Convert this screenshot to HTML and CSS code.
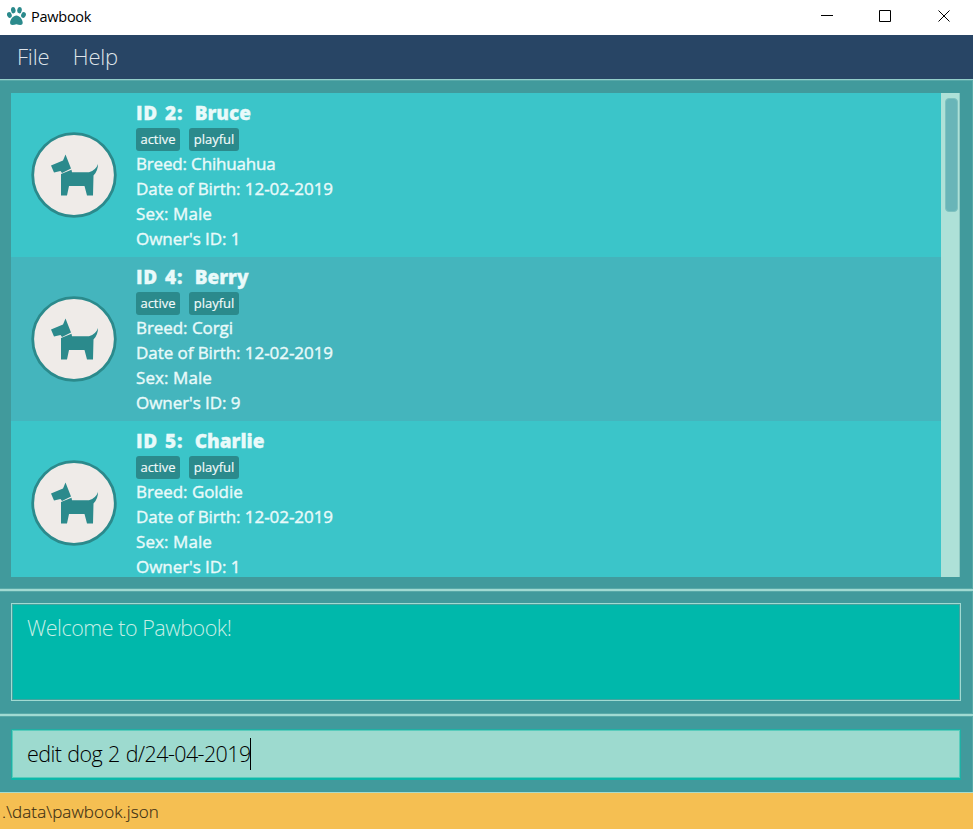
FILE: index.html
```html
<!DOCTYPE html>
<html lang="en">
<head>
<meta charset="utf-8">
<title>Pawbook</title>
<link rel="stylesheet" href="styles.css">
</head>
<body>
<svg class="defs" width="0" height="0" aria-hidden="true">
  <symbol id="dog" viewBox="0 0 86 86">
    <circle cx="43" cy="43" r="41.3" fill="#efebe8" stroke="#2b8a8c" stroke-width="2.800"/>
    <path fill="#2b8a8c" d="M20 33.500 32 28.500 34.500 22.500 40 36.500 31 41 29.500 39 23 40.500ZM30 42 40.500 37.800 41 40.300H58Q65 38 67 32Q67 39 62.500 43.500L62 63.500H56L53.500 54H38L36 63.500H30Z"/>
  </symbol>
</svg>
<div class="window">
  <header class="titlebar">
    <svg class="paw" viewBox="0 0 19 18" fill="#2b8a8c"><ellipse cx="2.400" cy="8" rx="2.300" ry="2.900" transform="rotate(-20 2.400 8)"/><ellipse cx="6.300" cy="3.200" rx="2.300" ry="3.200" transform="rotate(-8 6.300 3.200)"/><ellipse cx="12.500" cy="3.200" rx="2.300" ry="3.200" transform="rotate(8 12.500 3.200)"/><ellipse cx="16.500" cy="8" rx="2.300" ry="2.900" transform="rotate(20 16.500 8)"/><path d="M9.400 8.500C12.500 8.500 15.700 12.300 15.700 15.700 15.700 18.700 12.500 18 9.400 17.200 6.300 18 3.100 18.700 3.100 15.700 3.100 12.300 6.300 8.500 9.400 8.500Z"/></svg>
    <span class="title">Pawbook</span>
    <svg class="controls" viewBox="0 0 140 35" fill="none" stroke="#000"><path d="M8 15.500H20M66.500 10.500H77.500V21.500H66.500ZM125.500 10.500 136.500 21.500M136.500 10.500 125.500 21.500"/></svg>
  </header>
  <nav class="menu"><span>File</span><span>Help</span></nav>
  <main class="list-pane">
    <div class="list">
      <div class="rows">
        <article class="card">
          <svg class="avatar"><use href="#dog"/></svg>
          <div class="info">
            <h2 class="name"><span class="id">ID 2:</span>&nbsp; Bruce</h2>
            <div class="tags"><span class="tag active">active</span><span class="tag playful">playful</span></div>
            <p class="breed">Breed: Chihuahua</p><p>Date of Birth: 12-02-2019</p><p class="sex">Sex: Male</p><p>Owner's ID: 1</p>
          </div>
        </article>
        <article class="card alt">
          <svg class="avatar"><use href="#dog"/></svg>
          <div class="info">
            <h2 class="name"><span class="id">ID 4:</span>&nbsp; Berry</h2>
            <div class="tags"><span class="tag active">active</span><span class="tag playful">playful</span></div>
            <p>Breed: Corgi</p><p>Date of Birth: 12-02-2019</p><p class="sex">Sex: Male</p><p>Owner's ID: 9</p>
          </div>
        </article>
        <article class="card">
          <svg class="avatar"><use href="#dog"/></svg>
          <div class="info">
            <h2 class="name"><span class="id">ID 5:</span>&nbsp; Charlie</h2>
            <div class="tags"><span class="tag active">active</span><span class="tag playful">playful</span></div>
            <p>Breed: Goldie</p><p>Date of Birth: 12-02-2019</p><p class="sex">Sex: Male</p><p>Owner's ID: 1</p>
          </div>
        </article>
      </div>
      <div class="scrollbar"><div class="thumb"></div></div>
    </div>
  </main>
  <section class="result-pane"><div class="result"><span>Welcome to Pawbook!</span></div></section>
  <section class="command-pane"><div class="command"><span class="typed">edit dog 2 d/24-04-2019</span><i class="caret"></i></div></section>
  <footer class="status"><span>.\data\pawbook.json</span></footer>
</div>
</body>
</html>
```
FILE: styles.css
```css
* { box-sizing: border-box; margin: 0; }
body { font-family: "Open Sans", "Noto Sans", sans-serif; overflow: hidden; }
.defs { display: block; }
span, p, h2 { white-space: nowrap; }
.window { width: 973px; height: 829px; display: flex; flex-direction: column; background: #419a9c; }
.titlebar { height: 35px; background: #fff; display: flex; align-items: flex-start; padding-left: 7px; }
.paw { width: 19px; height: 18px; margin-top: 7px; }
.title { font: 14.5px/34px "Open Sans", sans-serif; margin-left: 5px; letter-spacing: -.25px; flex: 1; }
.controls { width: 140px; height: 35px; margin-right: 20px; }
.menu { height: 44px; background: #284565; color: #dfe4e9; font-size: 22px; font-weight: 300; line-height: 43px; letter-spacing: -.2px; padding-left: 17px; display: flex; gap: 23.5px; }
.list-pane { height: 510px; padding: 13px 13px 0 11px; border-top: 1px solid #92ceca; box-shadow: inset 0 1px #58a9a8, inset -1px 0 #58a9a8; }
.list { height: 484px; display: flex; overflow: hidden; }
.rows { width: 930px; }
.card { height: 164px; background: #3bc5c9; display: flex; padding: 0 0 0 20px; color: #e9fafa; }
.alt { background: #44b5bd; }
.avatar { width: 86px; height: 86px; margin-top: 39px; }
.info { margin-left: 19px; padding-top: 8px; }
.name { font-size: 19px; font-weight: 800; line-height: 25px; height: 25px; word-spacing: .8px; -webkit-text-stroke: .3px currentColor; }
.id { letter-spacing: .75px; word-spacing: 1.3px; }
.tags { display: flex; gap: 9px; height: 25px; padding-top: 2px; }
.tag { height: 23px; border-radius: 3px; background: #2b8a8c; font-size: 13px; line-height: 22px; text-align: center; color: #f3fbfb; -webkit-text-stroke: .15px currentColor; }
.active { width: 44px; }
.playful { width: 50px; }
.info p { font-size: 17px; line-height: 25px; letter-spacing: -.06px; -webkit-text-stroke: .4px currentColor; }
.info .breed { letter-spacing: -.17px; }
.info .sex { letter-spacing: .08px; }
.scrollbar { width: 19px; background: #aee1d8; padding: 5px 2px 0 4px; border-right: 1px solid #8fcac4; }
.thumb { width: 13px; height: 114px; border-radius: 4px; background: #69b5b8; border: 1px solid #7fc2c0; }
.result-pane { height: 125px; border-top: 2px solid #a1dad2; padding: 12px 12px 0 11px; box-shadow: inset 0 1px #58a9a8, inset -1px 0 #58a9a8, 0 -1px #58a9a8; }
.result { height: 98px; border: 1px solid #a1dad2; background: #00b8ab; color: #c6eee6; font-size: 21.5px; font-weight: 300; line-height: 47px; letter-spacing: -.48px; padding-left: 15px; box-shadow: inset 0 0 0 1px #43a49f; }
.command-pane { height: 78px; border-top: 2px solid #a1dad2; padding: 13px 12px 0 11px; box-shadow: inset 0 1px #58a9a8, inset -1px 0 #58a9a8, 0 -1px #58a9a8; }
.command { height: 51px; background: #9ddacf; border: 1px solid #1fb0a5; border-bottom: 2px solid #0eb8aa; box-shadow: inset 0 0 0 1px #5accbc; display: flex; align-items: center; padding-left: 15px; font-size: 21.5px; font-weight: 300; letter-spacing: -.6px; word-spacing: 1px; }
.typed { line-height: 28px; margin-top: -1px; }
.caret { width: 1.5px; height: 32px; margin-left: -1px; background: #000; }
.status { height: 37px; border-top: 1px solid #a9dccc; background: #f5bf52; color: #3b2e14; font-size: 17px; font-weight: 300; line-height: 37px; letter-spacing: .1px; padding-left: 2px; -webkit-text-stroke: .15px currentColor; }
```
